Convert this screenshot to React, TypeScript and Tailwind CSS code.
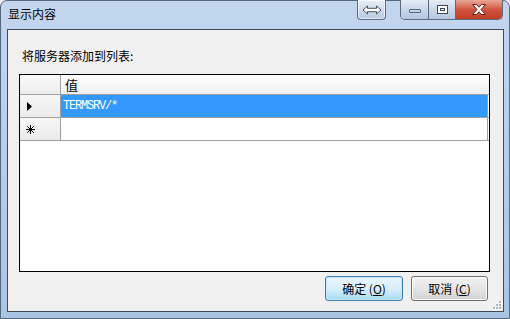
import React from "react";

const cjk = { fontFamily: '"Noto Sans CJK SC", "Microsoft YaHei", sans-serif' };
const mono = { fontFamily: '"Liberation Mono", "Courier New", monospace' };

function CaptionArrows() {
  return (
    <svg width="20" height="10" viewBox="0 0 20 10">
      <path
        d="M1 5 L5.5 1 L5.5 3.3 L14.5 3.3 L14.5 1 L19 5 L14.5 9 L14.5 6.7 L5.5 6.7 L5.5 9 Z"
        fill="#ffffff"
        stroke="#4a4f57"
        strokeWidth="1"
        strokeLinejoin="round"
      />
    </svg>
  );
}

function CloseGlyph() {
  return (
    <svg width="14" height="11" viewBox="0 0 14 11">
      <path
        d="M0.5 0.5 H4.5 L7 3.3 L9.5 0.5 H13.5 L9 5.5 L13.5 10.5 H9.5 L7 7.7 L4.5 10.5 H0.5 L5 5.5 Z"
        fill="#ffffff"
        stroke="#6b2317"
        strokeWidth="1"
        strokeLinejoin="round"
      />
    </svg>
  );
}

function SizeGrip() {
  const dots = [
    [6, 0],
    [3, 3],
    [6, 3],
    [0, 6],
    [3, 6],
    [6, 6],
  ];
  return (
    <svg width="9" height="9" viewBox="0 0 9 9">
      {dots.map(([x, y]) => (
        <g key={`${x}-${y}`}>
          <rect x={x + 1} y={y + 1} width="2" height="2" fill="#ffffff" />
          <rect x={x} y={y} width="2" height="2" fill="#b5b5b5" />
        </g>
      ))}
    </svg>
  );
}

export default function App() {
  return (
    <div className="w-[510px] h-[319px] overflow-hidden bg-[#f0f0f0]">
      <div className="w-[510px] h-[319px] flex flex-col rounded-t-[7px] border border-[#55677c] bg-gradient-to-b from-[#c2d7ee] via-[#b7cee8] to-[#aac4e4]">
        {/* Title bar */}
        <div className="flex h-[28px] items-start">
          <div className="pl-[7px] pt-[5px] text-[12px] leading-[16px] text-black" style={cjk}>
            显示内容
          </div>
          <div className="flex-1" />
          <div className="-mt-px flex h-[20px] w-[29px] items-center justify-center rounded-b-[4px] border border-t-0 border-[#5b6b80] bg-gradient-to-b from-[#e9f0f8] via-[#cfdcec] to-[#b8cbe2] shadow-[inset_0_0_0_1px_rgba(255,255,255,0.6)]">
            <CaptionArrows />
          </div>
          <div className="ml-[14px] mr-[6px] -mt-px flex h-[20px] overflow-hidden rounded-b-[5px] border border-t-0 border-[#5b6b80]">
            <div className="flex w-[28px] items-center justify-center border-r border-[#5b6b80] bg-gradient-to-b from-[#e3ecf6] via-[#c9d8ea] to-[#b2c7e0]">
              <div className="mt-[3px] h-[4px] w-[12px] rounded-[1px] border border-[#56657a] bg-[#c7d3e2]" />
            </div>
            <div className="flex w-[27px] items-center justify-center border-r border-[#5b6b80] bg-gradient-to-b from-[#e3ecf6] via-[#c9d8ea] to-[#b2c7e0]">
              <div className="flex h-[9px] w-[11px] items-center justify-center border border-[#3d4654] bg-white">
                <div className="h-[3px] w-[5px] border border-[#3d4654]" />
              </div>
            </div>
            <div className="flex w-[46px] items-center justify-center bg-gradient-to-b from-[#e8a898] via-[#d0553f] to-[#c33c23]">
              <CloseGlyph />
            </div>
          </div>
        </div>

        {/* Client area */}
        <div className="ml-[6px] flex h-[283px] w-[497px] flex-col border border-[#3e4a5a] bg-[#f0f0f0]">
          <div className="pl-[14px] pt-[18px] text-[12px] leading-[16px] text-black" style={cjk}>
            将服务器添加到列表:
          </div>

          {/* Grid */}
          <div className="ml-[11px] mt-[10px] flex h-[202px] w-[471px] flex-col border border-black bg-white">
            <div className="flex h-[20px] border-b border-[#a0a0a0]">
              <div className="w-[41px] border-r border-[#a0a0a0] bg-gradient-to-b from-[#fafafa] to-[#ececec]" />
              <div className="flex-1 bg-gradient-to-b from-[#ffffff] to-[#eeeff2] pl-[4px] text-[13px] leading-[19px] text-black" style={cjk}>
                值
              </div>
            </div>
            <div className="flex h-[23px] border-b border-[#a0a0a0]">
              <div className="flex w-[41px] items-center border-r border-[#a0a0a0] bg-gradient-to-b from-[#f7f7f7] to-[#ebebeb] pl-[7px]">
                <svg width="5" height="9" viewBox="0 0 5 9">
                  <path d="M0 0 L5 4.5 L0 9 Z" fill="#000" />
                </svg>
              </div>
              <div className="mr-px flex-1 border-r border-[#a0a0a0] bg-[#3399ff] pl-[2px] text-[12px] leading-[22px] tracking-[-1.2px] text-white" style={mono}>
                TERMSRV/*
              </div>
            </div>
            <div className="flex h-[23px] border-b border-[#a0a0a0]">
              <div className="flex w-[41px] items-center border-r border-[#a0a0a0] bg-gradient-to-b from-[#f7f7f7] to-[#ebebeb] pl-[6px]">
                <svg width="9" height="9" viewBox="0 0 9 9">
                  <path d="M4.5 0 V9 M0 4.5 H9 M1.2 1.2 L7.8 7.8 M7.8 1.2 L1.2 7.8" stroke="#000" strokeWidth="1" />
                </svg>
              </div>
              <div className="mr-px flex-1 border-r border-[#a0a0a0] bg-white" />
            </div>
            <div className="flex-1" />
          </div>

          {/* Buttons */}
          <div className="mt-[4px] flex items-start justify-end gap-[8px] pr-[15px]">
            <button
              className="flex h-[25px] w-[78px] items-center justify-center rounded-[3px] border border-[#3c7fb1] bg-gradient-to-b from-[#eaf6fd] via-[#d9f0fc] to-[#a7d9f5] text-[12px] leading-none text-black shadow-[inset_0_0_0_1px_#c4e5f6]"
              style={cjk}
            >
              确定 (<span className="underline">O</span>)
            </button>
            <button
              className="flex h-[25px] w-[77px] items-center justify-center rounded-[3px] border border-[#707070] bg-gradient-to-b from-[#f2f2f2] via-[#e6e6e6] to-[#d3d3d3] text-[12px] leading-none text-black shadow-[inset_0_0_0_1px_#fcfcfc]"
              style={cjk}
            >
              取消 (<span className="underline">C</span>)
            </button>
          </div>
          <div className="flex flex-1 items-end justify-end pb-[1px] pr-[1px]">
            <SizeGrip />
          </div>
        </div>
      </div>
    </div>
  );
}
